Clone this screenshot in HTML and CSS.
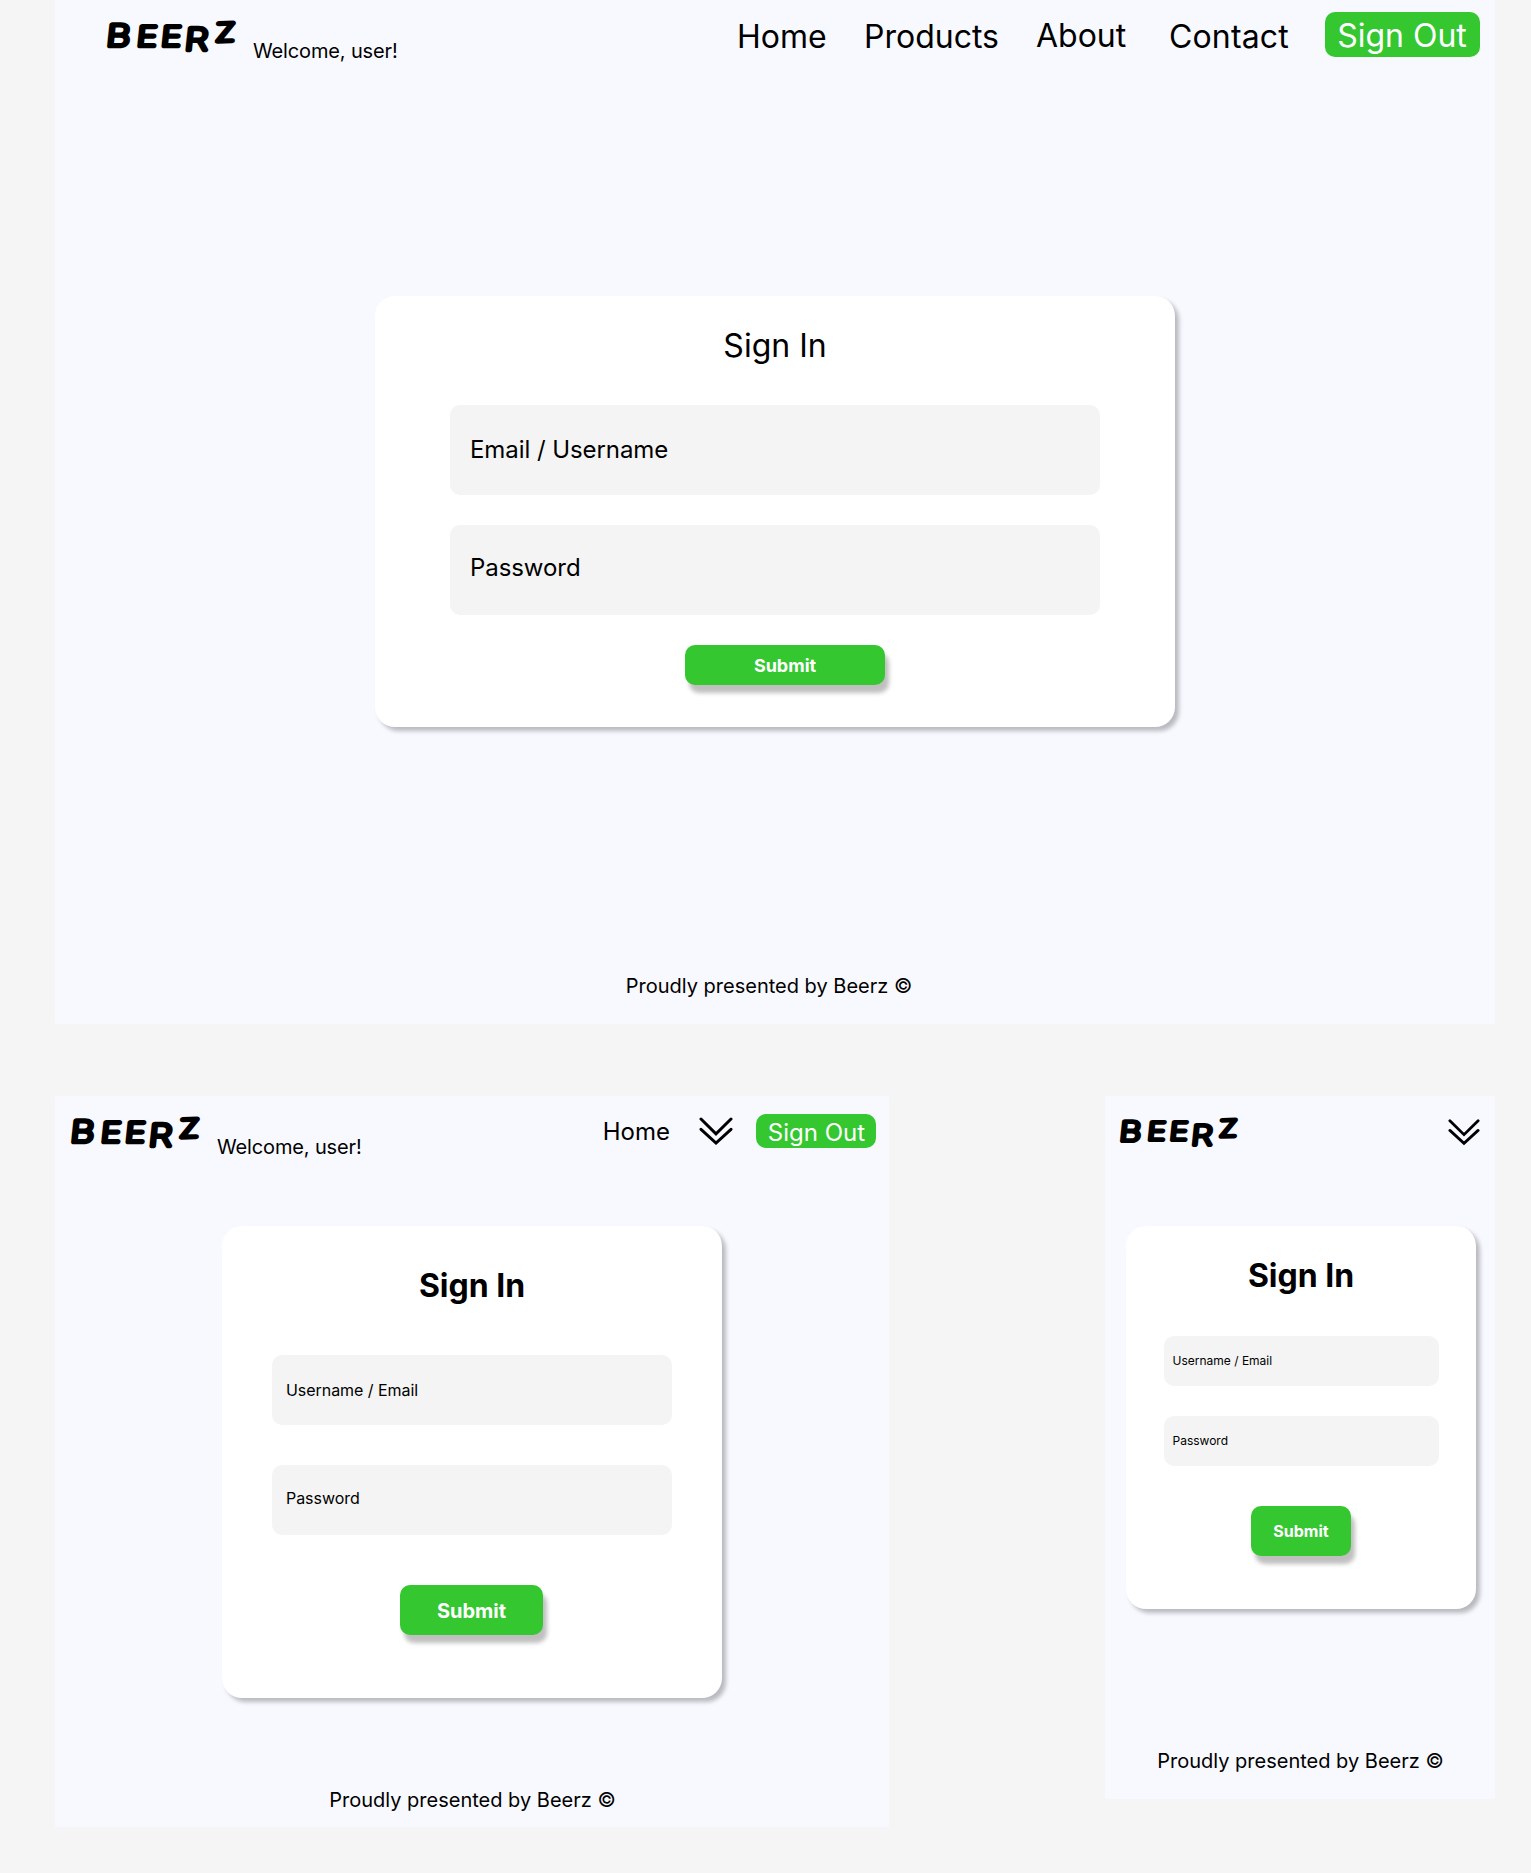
FILE: index.html
```html
<!DOCTYPE html>
<html lang="en">
<head>
<meta charset="utf-8">
<title>Beerz – Sign In</title>
<link rel="stylesheet" href="styles.css">
</head>
<body>
<svg width="0" height="0" class="defs" aria-hidden="true">
  <symbol id="chevrons" viewBox="0 0 34 28"><path d="M2 2 17 16.8 32 2M2 12.3 17 26 32 12.3"/></symbol>
</svg>
<main class="board">
  <section class="frame desktop">
    <header class="bar">
      <svg class="logo" viewBox="0 0 132 36"><text transform="skewX(-6) scale(1.25 1)" x="2 26.4 45.7 65 89.2" y="26 25.6 25.6 30.2 21.6" rotate="0 0 0 0 -2"><tspan class="logo-b">B</tspan>EE<tspan class="logo-r">R</tspan><tspan class="logo-z">Z</tspan></text></svg>
      <span class="welcome">Welcome, user!</span>
      <nav class="nav">
        <a>Home</a><a>Products</a><a class="raised">About</a><a class="contact">Contact</a>
      </nav>
      <a class="signout">Sign Out</a>
    </header>
    <form class="card">
      <h1>Sign In</h1>
      <div class="field">Email / Username</div>
      <div class="field second">Password</div>
      <div class="submit">Submit</div>
    </form>
    <footer>Proudly presented by Beerz ©</footer>
  </section>
  <div class="row">
    <section class="frame tablet">
      <header class="bar">
        <svg class="logo" viewBox="0 0 132 36"><text transform="skewX(-6) scale(1.25 1)" x="2 26.4 45.7 65 89.2" y="26 25.6 25.6 30.2 21.6" rotate="0 0 0 0 -2"><tspan class="logo-b">B</tspan>EE<tspan class="logo-r">R</tspan><tspan class="logo-z">Z</tspan></text></svg>
        <span class="welcome">Welcome, user!</span>
        <nav class="nav"><a>Home</a></nav>
        <svg class="chevrons"><use href="#chevrons"/></svg>
        <a class="signout">Sign Out</a>
      </header>
      <form class="card">
        <h1>Sign In</h1>
        <div class="field">Username / Email</div>
        <div class="field second">Password</div>
        <div class="submit">Submit</div>
      </form>
      <footer>Proudly presented by Beerz ©</footer>
    </section>
    <section class="frame mobile">
      <header class="bar">
        <svg class="logo" viewBox="0 0 132 36"><text transform="skewX(-6) scale(1.25 1)" x="2 26.4 45.7 65 89.2" y="26 25.6 25.6 30.2 21.6" rotate="0 0 0 0 -2"><tspan class="logo-b">B</tspan>EE<tspan class="logo-r">R</tspan><tspan class="logo-z">Z</tspan></text></svg>
        <svg class="chevrons"><use href="#chevrons"/></svg>
      </header>
      <form class="card">
        <h1>Sign In</h1>
        <div class="field">Username / Email</div>
        <div class="field second">Password</div>
        <div class="submit">Submit</div>
      </form>
      <footer>Proudly presented by Beerz ©</footer>
    </section>
  </div>
</main>
</body>
</html>
```
FILE: styles.css
```css
* { box-sizing: border-box; }
body {
  margin: 0;
  background: #f5f5f5;
  color: #000;
  font-family: Inter, sans-serif;
  font-size: 20px;
  line-height: 24px;
}
.defs { display: block; }
.board { padding: 0 36px 0 55px; height: 1873px; overflow: hidden; }
.row { display: flex; justify-content: space-between; align-items: flex-start; margin-top: 72px; }

.frame { display: flex; flex-direction: column; align-items: center; background: #f8f9ff; border-radius: 0 0 2px 2px; }
.desktop { height: 1024px; width: 1440px; }
.tablet { height: 731px; width: 834px; border-radius: 2px; }
.mobile { height: 703px; width: 390px; border-radius: 2px; }

.bar { display: flex; align-items: flex-start; width: 100%; flex: none; white-space: nowrap; }
.desktop .bar { height: 296px; padding: 12px 15px 0 51px; }
.tablet .bar { height: 130px; padding: 18px 13px 0 15px; }
.mobile .bar { height: 130px; padding: 20px 15px 0 14px; justify-content: space-between; }

.logo { width: 132px; height: 36px; flex: none; overflow: visible; }
.desktop .logo { margin-top: 8px; }
.tablet .logo { margin-top: 2px; }
.mobile .logo { width: 121px; height: 33px; margin-top: 1px; }
.logo text {
  font-family: Inter, sans-serif;
  font-size: 27px;
  font-weight: 100;
  stroke: #000;
  stroke-width: 4.6;
  stroke-linejoin: round;
  stroke-linecap: round;
}
.logo-b { font-size: 29.5px; }
.logo-r { font-size: 30px; }
.logo-z { font-size: 25px; }

.welcome { margin-left: 15px; letter-spacing: -.14px; }
.desktop .welcome { margin-top: 27px; }
.tablet .welcome { margin-top: 21px; }

.desktop .nav {
  display: grid;
  grid-template-columns: 127px 172px 133px 156px;
  margin: 5px 0 0 auto;
  font-size: 32px;
  line-height: 39px;
}
.desktop .raised { margin-top: -1px; }
.contact { letter-spacing: .15px; }
.tablet .nav { margin: 3px 29px 0 auto; font-size: 24px; line-height: 29px; }

.chevrons { width: 34px; height: 28px; flex: none; fill: none; stroke: #000; stroke-width: 3; stroke-linecap: round; }
.tablet .chevrons { margin: 3px 23px 0 0; }
.mobile .chevrons { width: 32px; margin-top: 2px; }

.signout { flex: none; text-align: center; background: #34c72f; color: #fff; border-radius: 10px; }
.desktop .signout { width: 155px; height: 45px; padding: 4px 1px 0 0; font-size: 32px; line-height: 39px; }
.tablet .signout { width: 120px; height: 34px; padding: 4px 0 0 1px; font-size: 24px; line-height: 29px; }

.card {
  display: flex;
  flex-direction: column;
  align-items: center;
  flex: none;
  background: #fff;
  border-radius: 20px;
  box-shadow: 4px 4px 4px rgba(0, 0, 0, .25);
}
.desktop .card { width: 800px; height: 431px; padding-top: 30px; }
.tablet .card { width: 500px; height: 472px; padding-top: 40px; }
.mobile .card { width: 350px; height: 383px; margin-left: 2px; padding-top: 30px; }

h1 { margin: 0; font-size: 32px; line-height: 39px; font-weight: 700; }
.desktop h1 { font-weight: 400; }

.field { background: #f4f4f4; border-radius: 10px; }
.desktop .field { width: 650px; height: 90px; margin-top: 40px; padding: 30px 20px; font-size: 24px; line-height: 29px; letter-spacing: -.07px; }
.desktop .second { margin-top: 30px; padding-top: 28px; }
.tablet .field { width: 400px; height: 70px; margin-top: 50px; padding: 26px 14px; font-size: 16px; line-height: 19px; letter-spacing: -.05px; }
.tablet .second { margin-top: 40px; padding-top: 24px; }
.mobile .field { width: 275px; height: 50px; margin-top: 41px; padding: 17px 9px; font-size: 12px; line-height: 15px; }
.mobile .second { margin-top: 30px; }

.submit {
  display: flex;
  align-items: center;
  justify-content: center;
  background: #34c72f;
  color: #fff;
  font-weight: 700;
  border-radius: 10px;
  box-shadow: 4px 8px 4px rgba(0, 0, 0, .25);
}
.desktop .submit { width: 200px; height: 40px; margin: 30px 0 0 20px; padding-top: 2px; font-size: 18px; }
.tablet .submit { width: 143px; height: 50px; margin: 50px 1px 0 0; padding-top: 1px; }
.mobile .submit { width: 100px; height: 50px; margin-top: 40px; font-size: 16px; }

footer { margin-top: auto; }
.desktop footer { margin-right: 12px; margin-bottom: 26px; }
.tablet footer { margin-left: 1px; margin-bottom: 15px; }
.mobile footer { margin-left: 1px; margin-bottom: 26px; }
```
